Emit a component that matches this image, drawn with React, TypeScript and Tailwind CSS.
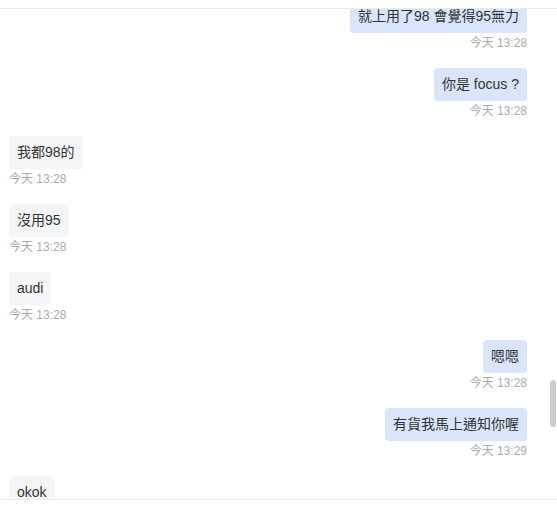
type Message = {
    id: number;
    text: string;
    time: string;
    mine: boolean;
};

const messages: Message[] = [
    { id: 1, text: '就上用了98 會覺得95無力', time: '今天 13:28', mine: true },
    { id: 2, text: '你是 focus ?', time: '今天 13:28', mine: true },
    { id: 3, text: '我都98的', time: '今天 13:28', mine: false },
    { id: 4, text: '沒用95', time: '今天 13:28', mine: false },
    { id: 5, text: 'audi', time: '今天 13:28', mine: false },
    { id: 6, text: '嗯嗯', time: '今天 13:28', mine: true },
    { id: 7, text: '有貨我馬上通知你喔', time: '今天 13:29', mine: true },
    { id: 8, text: 'okok', time: '今天 13:29', mine: false },
];

function MessageRow({ message }: { message: Message }) {
    return (
        <div className={`mb-[17px] flex flex-col ${message.mine ? 'items-end' : 'items-start'}`}>
            <div
                className={`rounded-sm px-2 py-2 text-[14px] leading-[17px] text-[#333] ${
                    message.mine ? 'bg-[#d9e5fd]' : 'bg-[#f4f5f7]'
                }`}
            >
                {message.text}
            </div>
            <div className="mt-[2px] text-[12px] leading-4 text-[#ababab]">{message.time}</div>
        </div>
    );
}

export default function App() {
    return (
        <div
            className="flex h-[517px] w-[557px] flex-col bg-white"
            style={{ fontFamily: '"Liberation Sans", "Noto Sans CJK TC", sans-serif' }}
        >
            <div className="h-[9px] shrink-0 border-b border-[#ebebeb]" />

            <div className="relative h-[490px] shrink-0 overflow-hidden">
                <div className="-mt-[9px] pl-[9px] pr-[30px]">
                    {messages.map((message) => (
                        <MessageRow key={message.id} message={message} />
                    ))}
                </div>
                <div className="absolute right-px top-[371px] h-[47px] w-[6px] rounded-full bg-[#cdcdcd]" />
            </div>

            <div className="flex-1 border-t border-[#ededed]" />
        </div>
    );
}
